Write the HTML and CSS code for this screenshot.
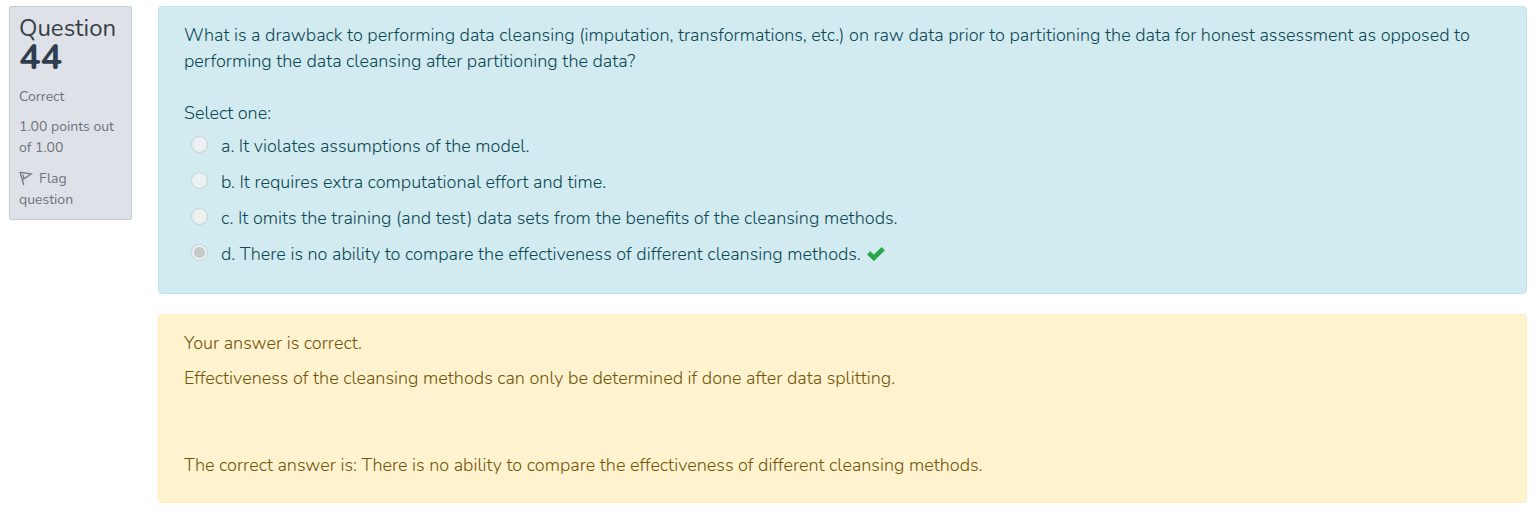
FILE: index.html
```html
<!DOCTYPE html>
<html lang="en">
<head>
<meta charset="utf-8">
<meta name="viewport" content="width=device-width, initial-scale=1">
<title>Question 44</title>
<link rel="stylesheet" href="styles.css">
</head>
<body>
<main class="question">
  <aside class="info">
    <h3 class="info-title">Question <span class="info-number">44</span></h3>
    <div class="info-line">Correct</div>
    <div class="info-line">1.00 points out of 1.00</div>
    <a class="info-line flag" href="#"><svg class="flag-icon" viewBox="0 0 14 16" aria-hidden="true"><path d="M1 2 4.800 15M1.300 2.300 12.500 3.800 4 9.500M3.800 4.500 5 8.500" fill="none" stroke="currentColor" stroke-width="1.200"/></svg>Flag question</a>
  </aside>
  <div class="content">
    <section class="panel formulation">
      <p class="prompt">What is a drawback to performing data cleansing (imputation, transformations, etc.) on raw data prior to partitioning the data for honest assessment as opposed to performing the data cleansing after partitioning the data?</p>
      <fieldset class="answers">
        <legend class="legend">Select one:</legend>
        <div class="answer"><input class="radio" type="radio" name="answer" id="a" disabled><label for="a">a. It violates assumptions of the model.</label></div>
        <div class="answer"><input class="radio" type="radio" name="answer" id="b" disabled><label for="b">b. It requires extra computational effort and time.</label></div>
        <div class="answer"><input class="radio" type="radio" name="answer" id="c" disabled><label for="c">c. It omits the training (and test) data sets from the benefits of the cleansing methods.</label></div>
        <div class="answer"><input class="radio" type="radio" name="answer" id="d" checked disabled><label for="d">d. There is no ability to compare the effectiveness of different cleansing methods.</label><svg class="check" viewBox="0 0 18 14" role="img" aria-label="Correct"><path d="M0.500 7.500 3.200 4.600 6.800 8 14.600 0.500 17.500 3.200 6.900 13.700Z" fill="#28a745" stroke="#28a745" stroke-width=".8" stroke-linejoin="round"/></svg></div>
      </fieldset>
    </section>
    <section class="panel feedback">
      <p class="feedback-line">Your answer is correct.</p>
      <p class="feedback-line">Effectiveness of the cleansing methods can only be determined if done after data splitting.</p>
      <p class="right-answer">The correct answer is: There is no ability to compare the effectiveness of different cleansing methods.</p>
    </section>
  </div>
</main>
</body>
</html>
```
FILE: styles.css
```css
* { box-sizing: border-box; }
body {
  margin: 0;
  background: #fff;
  font: 300 18px/26px Nunito, Lato, sans-serif;
}
.question {
  display: flex;
  align-items: flex-start;
  gap: 26px;
  padding: 6px 9px 8px;
}
.info {
  flex: 0 0 123px;
  padding: 7px 9px 9px;
  border: 1px solid #c4cdd4;
  border-radius: 2px;
  background: #dee2e8;
  color: #6c737b;
  font-weight: 400;
}
.info-title {
  margin: 0 0 12px;
  font-size: 24px;
  font-weight: 400;
  line-height: 28px;
  color: #373f49;
}
.info-number {
  display: block;
  font-size: 36px;
  font-weight: 700;
  line-height: 32px;
  color: #2f3e4e;
}
.info-line {
  display: block;
  margin-top: 9px;
  font-size: 14px;
  line-height: 21px;
}
.flag {
  margin-top: 10px;
  color: inherit;
  text-decoration: none;
}
.flag-icon {
  width: 14px;
  height: 16px;
  margin-right: 6px;
  vertical-align: -3px;
}
.content { flex: 1; min-width: 0; }
.panel {
  border: 1px solid;
  border-radius: 4px;
}
.formulation {
  padding: 15px 25px 21px;
  margin-bottom: 20px;
  background: #d2ebf0;
  border-color: #bee5eb;
  color: #0c4854;
}
.prompt { margin: 0 0 26px; }
.answers {
  display: grid;
  margin: 0;
  padding: 0;
  border: 0;
}
.legend { padding: 0; margin-bottom: 2px; }
.answer {
  display: flex;
  align-items: center;
  min-height: 36px;
}
.radio {
  appearance: none;
  flex: none;
  width: 17px;
  height: 17px;
  margin: 0 13px 4px 7px;
  border: 1px solid #c5d0d2;
  border-radius: 50%;
  background: #ecf2f3;
}
.radio:checked {
  background: radial-gradient(circle, #c5c9ca 0 5px, #ecf2f3 6px);
}
.check {
  flex: none;
  width: 18px;
  height: 14px;
  margin-left: 6px;
}
.feedback {
  padding: 15px 25px 24px;
  background: #fef2cf;
  border-color: #ffeeba;
  color: #735507;
}
.feedback-line { margin: 0 0 9px; }
.right-answer { margin: 61px 0 0; }
```
